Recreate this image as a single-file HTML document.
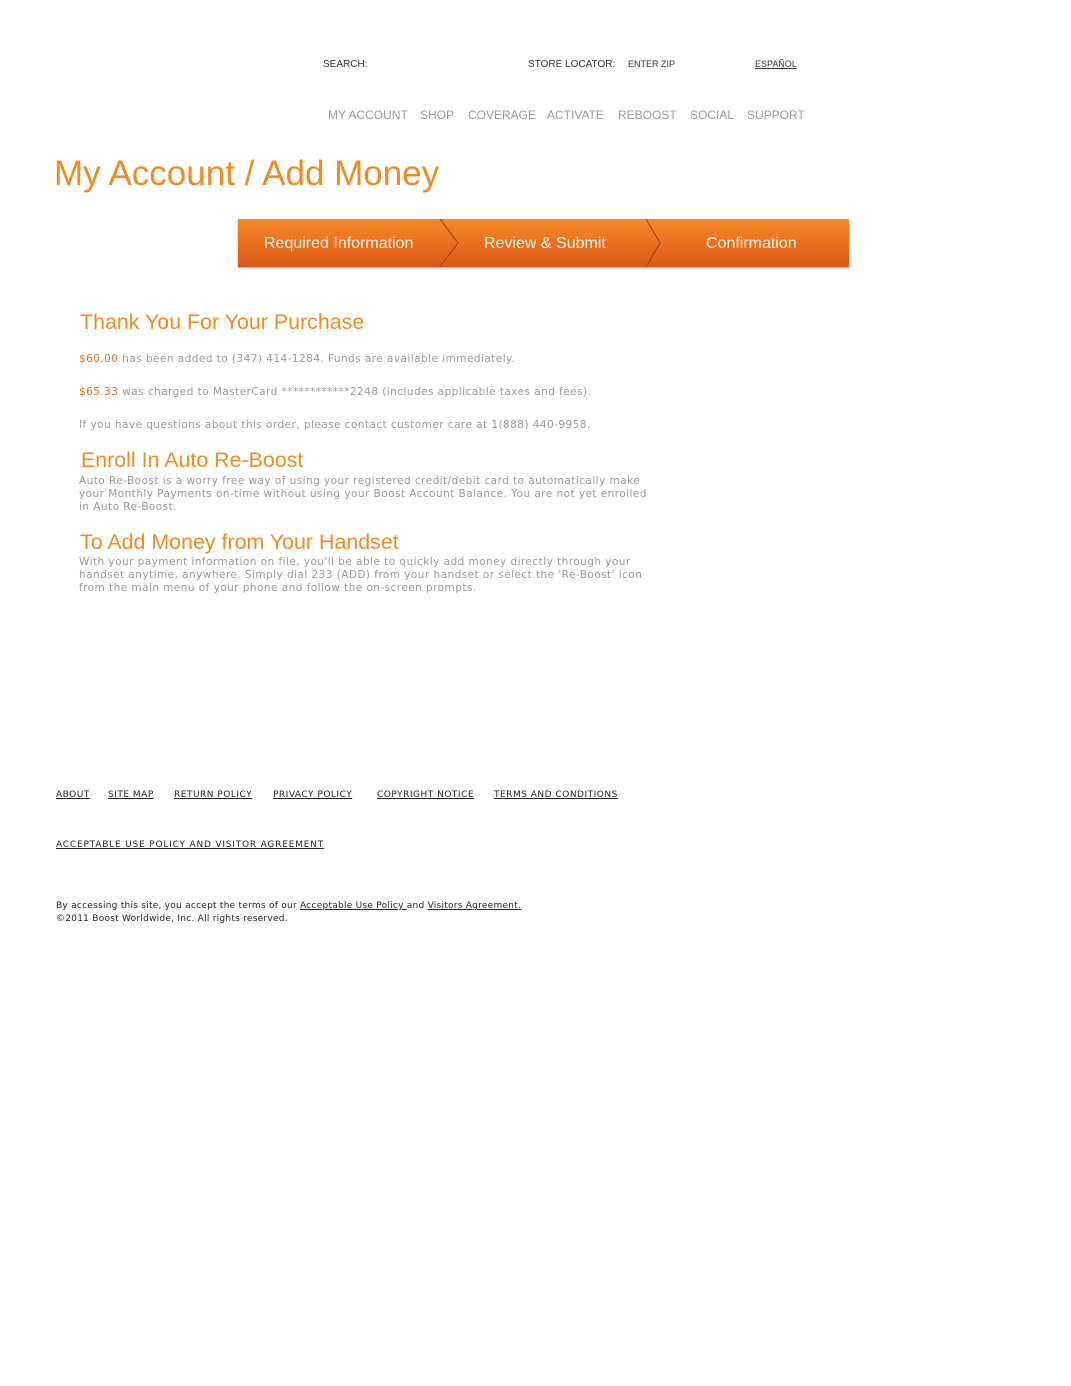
<!DOCTYPE html>
<html><head><style>
body{margin:0;background:#fff;font-family:"DejaVu Sans",Verdana,sans-serif;}
.a{position:absolute;white-space:nowrap;}
.top{font-family:"Liberation Sans",sans-serif;font-size:10px;color:#333;}
.nav{font-family:"Liberation Sans",sans-serif;font-size:12px;color:#999;}
.h{font-family:"Liberation Sans",sans-serif;color:#f08a24;}
.p{font-size:10.5px;color:#999;letter-spacing:0.45px;line-height:13px;}
.o{color:#e07020;}
.f{font-size:9px;color:#222;text-decoration:underline;letter-spacing:0.5px;}
.bar{position:absolute;left:238px;top:219px;width:611px;height:48px;background:linear-gradient(#f58b2a,#e86a1e 60%,#d85a1a);box-shadow:0 1px 2px #999;}
.bar span{position:absolute;top:15px;font-family:"Liberation Sans",sans-serif;font-size:16px;color:#fff5e6;}
</style></head><body>
<div class="a top" style="left:323px;top:59px">SEARCH:</div>
<div class="a top" style="left:528px;top:59px">STORE LOCATOR:</div>
<div class="a top" style="left:628px;top:59px;font-size:9px">ENTER ZIP</div>
<div class="a top" style="left:755px;top:59px;font-size:9px;text-decoration:underline">ESPAÑOL</div>
<div class="a nav" style="left:328px;top:108px">MY ACCOUNT</div>
<div class="a nav" style="left:420px;top:108px">SHOP</div>
<div class="a nav" style="left:468px;top:108px">COVERAGE</div>
<div class="a nav" style="left:547px;top:108px">ACTIVATE</div>
<div class="a nav" style="left:618px;top:108px">REBOOST</div>
<div class="a nav" style="left:690px;top:108px">SOCIAL</div>
<div class="a nav" style="left:747px;top:108px">SUPPORT</div>
<div class="a h" style="left:54px;top:154px;font-size:35px">My Account / Add Money</div>
<div class="bar">
<svg width="611" height="48" style="position:absolute;left:0;top:0"><path d="M202 0 L220 24 L202 48" stroke="#a84a14" fill="none" stroke-width="1.2"/><path d="M408 0 L422 24 L408 48" stroke="#a84a14" fill="none" stroke-width="1.2"/></svg>
<span style="left:26px;top:16px">Required Information</span>
<span style="left:246px;top:16px">Review &amp; Submit</span>
<span style="left:468px;top:16px">Confirmation</span>
</div>
<div class="a h" style="left:80px;top:310px;font-size:21.4px">Thank You For Your Purchase</div>
<div class="a p" style="left:79px;top:353px"><span class="o">$60.00</span> has been added to (347) 414-1284. Funds are available immediately.</div>
<div class="a p" style="left:79px;top:386px"><span class="o">$65.33</span> was charged to MasterCard ************2248 (includes applicable taxes and fees).</div>
<div class="a p" style="left:79px;top:419px">If you have questions about this order, please contact customer care at 1(888) 440-9958.</div>
<div class="a h" style="left:81px;top:448px;font-size:21.4px">Enroll In Auto Re-Boost</div>
<div class="a p" style="left:79px;top:475px;white-space:normal;width:580px">Auto Re-Boost is a worry free way of using your registered credit/debit card to automatically make your Monthly Payments on-time without using your Boost Account Balance. You are not yet enrolled in Auto Re-Boost.</div>
<div class="a h" style="left:80px;top:530px;font-size:21.4px">To Add Money from Your Handset</div>
<div class="a p" style="left:79px;top:556px;white-space:normal;width:585px">With your payment information on file, you'll be able to quickly add money directly through your handset anytime, anywhere. Simply dial 233 (ADD) from your handset or select the 'Re-Boost' icon from the main menu of your phone and follow the on-screen prompts.</div>
<div class="a f" style="left:56px;top:790px">ABOUT</div>
<div class="a f" style="left:108px;top:790px">SITE MAP</div>
<div class="a f" style="left:174px;top:790px">RETURN POLICY</div>
<div class="a f" style="left:273px;top:790px">PRIVACY POLICY</div>
<div class="a f" style="left:377px;top:790px">COPYRIGHT NOTICE</div>
<div class="a f" style="left:494px;top:790px">TERMS AND CONDITIONS</div>
<div class="a f" style="left:56px;top:840px;letter-spacing:0.8px">ACCEPTABLE USE POLICY AND VISITOR AGREEMENT</div>
<div class="a" style="left:56px;top:900px;font-size:9px;color:#222;line-height:13px;letter-spacing:0.25px">By accessing this site, you accept the terms of our <u>Acceptable Use Policy </u>and <u>Visitors Agreement.</u><br>©2011 Boost Worldwide, Inc. All rights reserved.</div>
</body></html>
